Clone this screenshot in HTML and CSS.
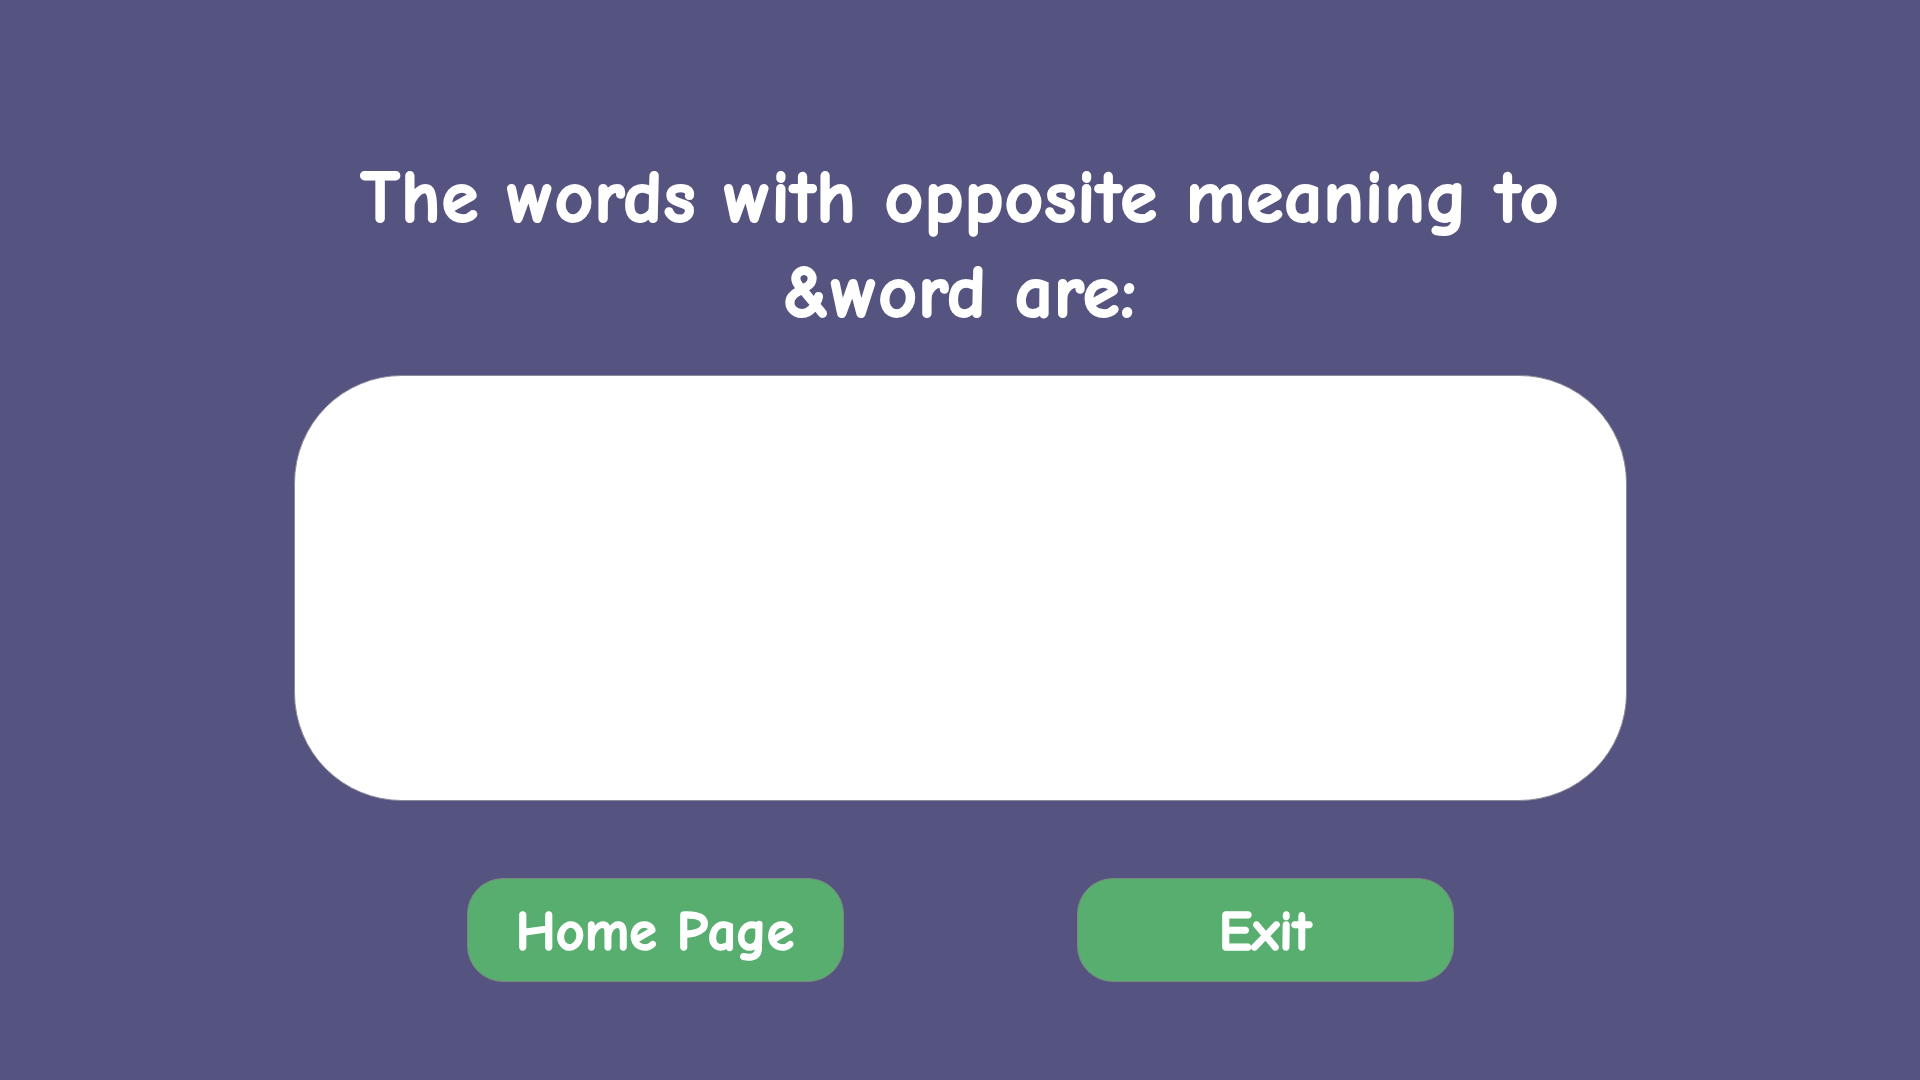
FILE: index.html
```html
<!DOCTYPE html>
<html lang="en">
<head>
<meta charset="utf-8">
<title>Antonyms</title>
<link rel="stylesheet" href="styles.css">
</head>
<body>
<main class="screen">
  <h1 class="question">The words with opposite meaning to<br>&amp;word are:</h1>
  <div class="answer-box"></div>
  <div class="actions">
    <button class="btn">Home Page</button>
    <button class="btn">Exit</button>
  </div>
</main>
</body>
</html>
```
FILE: styles.css
```css
html, body {
  margin: 0;
  padding: 0;
  background: #55537f;
}
.screen {
  width: 1920px;
  height: 1080px;
  display: flex;
  flex-direction: column;
  align-items: center;
  box-sizing: border-box;
  padding-top: 150px;
  font-family: "Comic Sans MS", "Comic Neue", "Open Sans", sans-serif;
}
.question {
  margin: 0;
  color: #ffffff;
  font-weight: 700;
  font-size: 75px;
  line-height: 95px;
  text-align: center;
  letter-spacing: 1px;
  -webkit-text-stroke: 2px #ffffff;
}
.answer-box {
  margin-top: 35px;
  width: 1333px;
  height: 426px;
  background: #ffffff;
  border-radius: 108px;
  box-sizing: border-box;
  border: 1px solid #8a8a99;
}
.actions {
  margin-top: 77px;
  display: flex;
  gap: 233px;
}
.btn {
  width: 377px;
  height: 104px;
  background: #58ae6f;
  border: 1px solid #7a8a80;
  border-radius: 36px;
  color: #ffffff;
  font-family: inherit;
  font-weight: 700;
  font-size: 56px;
  padding: 4px 0 0;
  -webkit-text-stroke: 1.5px #ffffff;
  cursor: pointer;
}
```
